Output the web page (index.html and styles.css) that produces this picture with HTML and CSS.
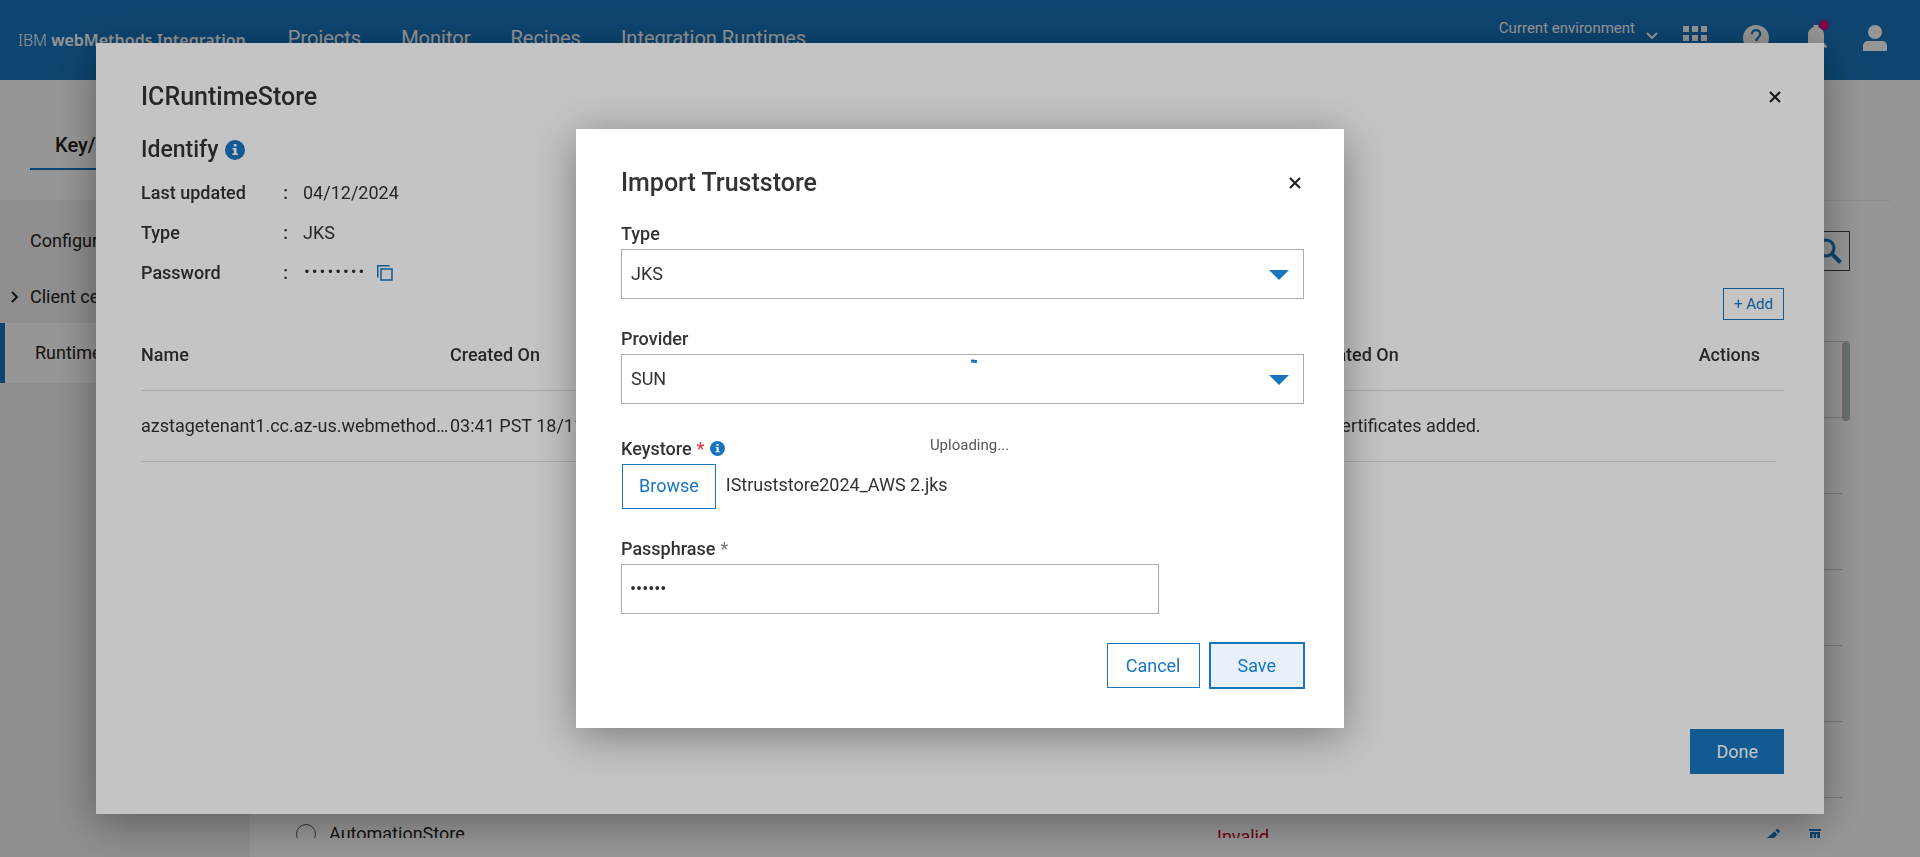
FILE: index.html
```html
<!DOCTYPE html>
<html lang="en">
<head>
<meta charset="utf-8">
<title>IBM webMethods Integration</title>
<link rel="stylesheet" href="styles.css">
</head>
<body>
<div class="app">
  <header class="topbar">
    <a class="brand" href="#">IBM <strong>webMethods Integration</strong></a>
    <nav class="nav">
      <a href="#">Projects</a>
      <a href="#">Monitor</a>
      <a href="#">Recipes</a>
      <a href="#">Integration Runtimes</a>
    </nav>
    <div class="tools">
      <button class="env" type="button">
        <span class="env-label">Current environment</span>
        <svg class="env-chevron" width="12" height="8" viewBox="0 0 12 8"><path d="M1 1l5 5 5-5" fill="none" stroke="#fff" stroke-width="2"/></svg>
      </button>
      <button class="tool" type="button" aria-label="Apps">
        <svg width="24" height="24" viewBox="0 0 24 24" fill="#fff"><path d="M0 0h6v6H0zM9 0h6v6H9zM18 0h6v6h-6zM0 9h6v6H0zM9 9h6v6H9zM18 9h6v6h-6zM0 18h6v6H0zM9 18h6v6H9zM18 18h6v6h-6z"/></svg>
      </button>
      <button class="tool" type="button" aria-label="Help">
        <svg width="26" height="26" viewBox="0 0 26 26"><circle cx="13" cy="13" r="13" fill="#fff"/><path d="M8.800 9.300c0-2.600 1.900-4.200 4.200-4.200s4.200 1.600 4.200 3.900c0 3.300-4 3.600-4 7" fill="none" stroke="#1776bf" stroke-width="2.200"/><path d="M12 18.300h2.400v2.400H12z" fill="#1776bf"/></svg>
      </button>
      <button class="tool bell" type="button" aria-label="Notifications">
        <svg width="22" height="26" viewBox="0 0 22 26" fill="#fff"><path d="M8.500 0h5v2.200c3.400.9 5.500 3.800 5.500 7.300V18l3 3v1.500H0V21l3-3V9.500C3 6 5.100 3.100 8.500 2.200zM8.500 23.500h5a2.500 2.500 0 0 1-5 0z"/></svg>
        <span class="bell-dot"></span>
      </button>
      <button class="tool" type="button" aria-label="Account">
        <svg width="24" height="26" viewBox="0 0 24 26" fill="#fff"><circle cx="12" cy="7" r="7"/><path d="M0 26v-5c0-3 2-5 5-5h14c3 0 5 2 5 5v5z"/></svg>
      </button>
    </div>
  </header>

  <div class="tabs">
    <a class="tab" href="#">Key/Trust store</a>
  </div>

  <div class="body">
    <aside class="side">
      <a class="side-item" href="#">Configurations</a>
      <a class="side-item side-tree" href="#">
        <svg class="side-chevron" width="8" height="12" viewBox="0 0 8 12"><path d="M1 1l5 5-5 5" fill="none" stroke="#222" stroke-width="2"/></svg>
        Client certificates
      </a>
      <a class="side-item side-active" href="#">Runtime stores</a>
    </aside>
    <main class="main">
      <div class="search">
        <input class="search-input" type="search" aria-label="Search">
        <svg width="26" height="26" viewBox="0 0 26 26"><circle cx="10" cy="10" r="8" fill="none" stroke="#1776bf" stroke-width="3"/><path d="M16 16l8.500 8.500" stroke="#1776bf" stroke-width="4"/></svg>
      </div>
      <div class="stores">
        <div class="store-list">
          <div class="store"></div>
          <div class="store"></div>
          <div class="store"></div>
          <div class="store"></div>
          <div class="store"></div>
          <div class="store"></div>
          <div class="store">
            <label class="store-name"><input class="radio" type="radio" name="store">AutomationStore</label>
            <span class="store-state">Invalid</span>
            <span class="store-actions">
              <button class="tool" type="button" aria-label="Edit"><svg width="14" height="16" viewBox="0 0 14 16" fill="#1776bf"><path d="M8.500 3.500l3 3L4 14H0v-3.200zM9.500 2.500L11.500.500l2.500 2.500-1.500 2.500z"/></svg></button>
              <button class="tool" type="button" aria-label="Delete"><svg width="12" height="16" viewBox="0 0 12 16" fill="#1776bf"><path d="M0 1h12v2H0zM1 4h10v12H1z"/><path d="M3.500 6h1.200v8H3.500zM7 6h1.200v8H7z" fill="#fff"/></svg></button>
            </span>
          </div>
        </div>
        <div class="scroll"><span class="scroll-thumb"></span></div>
      </div>
    </main>
  </div>
</div>

<div class="overlay">
  <section class="sheet" role="dialog" aria-labelledby="sheet-title">
    <div class="dialog-head">
      <h1 class="title" id="sheet-title">ICRuntimeStore</h1>
      <button class="close" type="button" aria-label="Close"><svg width="12" height="12" viewBox="0 0 12 12"><path d="M1 1l10 10M11 1L1 11" stroke="#222" stroke-width="2.200"/></svg></button>
    </div>
    <h2 class="subtitle">Identify
      <svg width="20" height="20" viewBox="0 0 20 20"><circle cx="10" cy="10" r="10" fill="#1776bf"/><path d="M8.700 4h2.800v2.400H8.700zM7.500 8h4v5.600H13V15H7.300v-1.400h1.500V9.400H7.500z" fill="#fff"/></svg>
    </h2>
    <dl class="facts">
      <div class="fact"><dt>Last updated</dt><dd>04/12/2024</dd></div>
      <div class="fact"><dt>Type</dt><dd>JKS</dd></div>
      <div class="fact"><dt>Password</dt><dd><span class="mask">••••••••</span>
        <button class="tool" type="button" aria-label="Copy"><svg width="16" height="16" viewBox="0 0 16 16" fill="none" stroke="#1776bf"><path d="M.750 12.500V.750H12.500" stroke-width="1.500"/><path d="M4 4h11v11H4z" stroke-width="1.500"/></svg></button></dd></div>
    </dl>
    <button class="btn btn-small" type="button">+ Add</button>
    <table class="certs">
      <colgroup><col class="col-name"><col class="col-created"><col class="col-updated"><col><col class="col-gutter"></colgroup>
      <thead><tr><th>Name</th><th>Created On</th><th>Updated On</th><th class="actions">Actions</th><th></th></tr></thead>
      <tbody><tr><td>azstagetenant1.cc.az-us.webmethods.io</td><td>03:41 PST 18/11/2024</td><td>No certificates added.</td><td></td><td class="gutter"></td></tr></tbody>
    </table>
    <div class="dialog-foot">
      <button class="btn btn-primary" type="button">Done</button>
    </div>
  </section>
</div>

<div class="overlay">
  <form class="dialog" role="dialog" aria-labelledby="dialog-title">
    <div class="dialog-head">
      <h1 class="title" id="dialog-title">Import Truststore</h1>
      <button class="close" type="button" aria-label="Close"><svg width="12" height="12" viewBox="0 0 12 12"><path d="M1 1l10 10M11 1L1 11" stroke="#222" stroke-width="2.200"/></svg></button>
    </div>
    <div class="field field-first">
      <label class="label" for="type">Type</label>
      <div class="select-wrap">
        <select class="control" id="type"><option>JKS</option></select>
        <svg class="caret" width="20" height="10" viewBox="0 0 20 10"><path d="M0 0h20L10 10z" fill="#1776bf"/></svg>
      </div>
    </div>
    <div class="field">
      <label class="label" for="provider">Provider</label>
      <div class="select-wrap">
        <select class="control" id="provider"><option>SUN</option></select>
        <svg class="caret" width="20" height="10" viewBox="0 0 20 10"><path d="M0 0h20L10 10z" fill="#1776bf"/></svg>
      </div>
    </div>
    <div class="field field-file">
      <span class="label" id="keystore-label">Keystore <span class="required">*</span>
        <svg width="15" height="15" viewBox="0 0 20 20"><circle cx="10" cy="10" r="10" fill="#1776bf"/><path d="M8.700 4h2.800v2.400H8.700zM7.500 8h4v5.600H13V15H7.300v-1.400h1.500V9.400H7.500z" fill="#fff"/></svg>
      </span>
      <div class="file">
        <button class="btn btn-browse" type="button" aria-describedby="keystore-label">Browse</button>
        <span class="file-name">IStruststore2024_AWS 2.jks</span>
      </div>
    </div>
    <div class="field">
      <label class="label" for="pass">Passphrase <span class="mark">*</span></label>
      <input class="control control-pass" id="pass" type="password" value="secret">
    </div>
    <div class="dialog-foot">
      <button class="btn" type="button">Cancel</button>
      <button class="btn btn-focus" type="submit">Save</button>
    </div>
    <div class="loading" role="status">
      <svg width="60" height="60" viewBox="0 0 60 60"><path d="M31 3a27 27 0 0 1 6 .800" fill="none" stroke="#1776bf" stroke-width="3"/></svg>
      <span>Uploading...</span>
    </div>
  </form>
</div>
</body>
</html>
```
FILE: styles.css
```css
* { box-sizing: border-box; }
body {
  margin: 0;
  font-family: Roboto, "Liberation Sans", sans-serif;
  font-size: 18px;
  line-height: 24px;
  color: #333;
  overflow: hidden;
}
a { color: inherit; text-decoration: none; }
button { font: inherit; color: inherit; padding: 0; border: 0; background: none; cursor: pointer; }
svg { display: block; flex: none; }

/* page shell */
.app { display: flex; flex-direction: column; height: 100vh; background: #fff; color: #222; }
.topbar {
  flex: none;
  display: flex;
  align-items: center;
  height: 80px;
  padding: 0 33px 4px 18px;
  background: #1776bf;
  color: #fff;
}
.brand { padding-top: 4px; font: 300 16px/24px "Noto Sans", sans-serif; }
.brand strong { font-weight: 600; }
.nav { display: flex; gap: 40px; margin-left: 42px; font-size: 20px; }
.tools { display: flex; align-items: center; gap: 36px; margin-left: auto; }
.env { display: flex; gap: 11px; height: 44px; margin-right: -11px; font-size: 15px; }
.env-chevron { align-self: center; margin-bottom: 4px; }
.tool { display: block; }
.bell { position: relative; }
.bell-dot { position: absolute; top: -5px; right: -2px; width: 10px; height: 10px; border-radius: 50%; background: #da0078; }

.tabs { flex: none; display: flex; align-items: flex-end; height: 120px; padding: 0 30px 30px; }
.tab { padding: 0 25px 11px; border-bottom: 2px solid #1776bf; font-size: 20px; font-weight: 500; }

.body { flex: 1; display: flex; min-height: 0; }
.side { flex: none; width: 250px; padding-top: 11px; background: #f2f2f2; }
.side-item { display: flex; align-items: center; height: 60px; padding-left: 30px; }
.side-tree { gap: 11px; padding-left: 11px; height: 52px; }
.side-active { border-left: 5px solid #1776bf; background: #fff; }

.main { flex: 1; display: flex; flex-direction: column; margin-right: 30px; padding: 30px 40px 19px 40px; border-top: 1px solid #eee; }
.search { align-self: flex-end; display: flex; align-items: center; width: 400px; height: 40px; padding: 0 7px; border: 1px solid #444; }
.search-input { flex: 1; border: 0; outline: 0; background: none; font: inherit; }
.stores { flex: 1; display: flex; min-height: 0; margin-top: 70px; border-top: 1px solid #ccc; }
.store-list { flex: 1; overflow: hidden; }
.store { display: flex; align-items: center; height: 76px; padding-left: 6px; border-bottom: 1px solid #ccc; }
.store-name { display: flex; align-items: center; gap: 13px; width: 921px; padding-bottom: 4px; }
.radio { appearance: none; width: 20px; height: 20px; margin: 0; border: 1px solid #555; border-radius: 50%; }
.store-state { padding-top: 2px; color: #c00020; }
.store-actions { display: flex; gap: 29px; margin: 0 21px 0 auto; }
.scroll { flex: none; width: 8px; }
.scroll-thumb { display: block; height: 79px; border-radius: 4px; background: #b4bcc0; }

/* dialogs */
.overlay {
  position: fixed;
  inset: 0;
  display: flex;
  align-items: center;
  justify-content: center;
  background: rgba(0, 0, 0, .23);
}
.sheet, .dialog {
  position: relative;
  display: flex;
  flex-direction: column;
  padding: 38px 40px 40px 45px;
  background: #fff;
  box-shadow: 0 8px 40px rgba(0, 0, 0, .37);
}
.sheet { width: 90%; height: 90%; }
.dialog { width: 40%; height: 70%; }
.dialog-head { display: flex; align-items: center; justify-content: space-between; }
.title { margin: 0; font-size: 25px; line-height: 32px; font-weight: 500; }
.close { padding: 0 3px; }
.subtitle { display: flex; align-items: center; gap: 6px; margin: 23px 0 14px; font-size: 23px; line-height: 28px; font-weight: 500; }
.facts { display: grid; gap: 10px; margin: 0; }
.fact { display: flex; line-height: 30px; }
.fact dt { width: 142px; font-weight: 500; }
.fact dt::after { content: ":"; float: right; margin-right: -5px; }
.fact dd { display: flex; align-items: center; gap: 12px; margin: 0 0 0 20px; }
.mask { font-family: "Liberation Mono", monospace; font-size: 13px; }

.btn { height: 45px; padding: 0 18px; border: 1px solid #1776bf; color: #1776bf; background: #fff; }
.btn-browse { padding: 0 16px; }
.sheet .btn-small { align-self: flex-end; height: 32px; padding: 0 10px; font-size: 15px; }
.btn-primary { padding: 0 25px; background: #1776bf; color: #fff; }
.btn-focus { padding: 0 27px; background: #e8f1f9; box-shadow: 0 0 0 1px #1776bf; }

.certs { width: 100%; table-layout: fixed; border-collapse: collapse; text-align: left; }
.col-name { width: 309px; }
.col-created { width: 52%; }
.col-updated { width: 24%; }
.col-gutter { width: 8px; }
.certs th, .certs td { height: 71px; padding: 0; border-bottom: 1px solid #ddd; overflow: hidden; text-overflow: ellipsis; white-space: nowrap; }
.certs th { font-weight: 500; }
.certs .actions { overflow: visible; }
.certs .gutter { border: 0; }

.dialog-foot { display: flex; align-items: center; justify-content: flex-end; gap: 10px; margin-top: auto; }

.field { margin-bottom: 28px; }
.field-first { margin-top: 23px; }
.field-file { margin-top: 5px; }
.label { display: flex; align-items: center; gap: 5px; margin-bottom: 3px; font-weight: 500; }
.required { color: #e53946; }
.mark { color: #777; font-weight: 400; }
.select-wrap { position: relative; }
.control {
  appearance: none;
  display: block;
  width: 100%;
  height: 50px;
  padding: 0 9px;
  border: 1px solid #aaa;
  border-radius: 0;
  outline: 0;
  background: #fff;
  font: inherit;
  color: #333;
}
.control-pass { width: calc(79% - 2px); padding: 0 8px; }
.caret { position: absolute; right: 15px; top: 21px; pointer-events: none; }
.file { display: flex; align-items: center; gap: 10px; padding-left: 1px; }
.file-name { padding-bottom: 2px; }
.loading {
  position: absolute;
  top: 229px;
  left: 0;
  right: 0;
  display: flex;
  flex-direction: column;
  align-items: center;
  gap: 15px;
  padding-left: 19px;
  font-size: 15px;
  color: #555;
  pointer-events: none;
}
```
